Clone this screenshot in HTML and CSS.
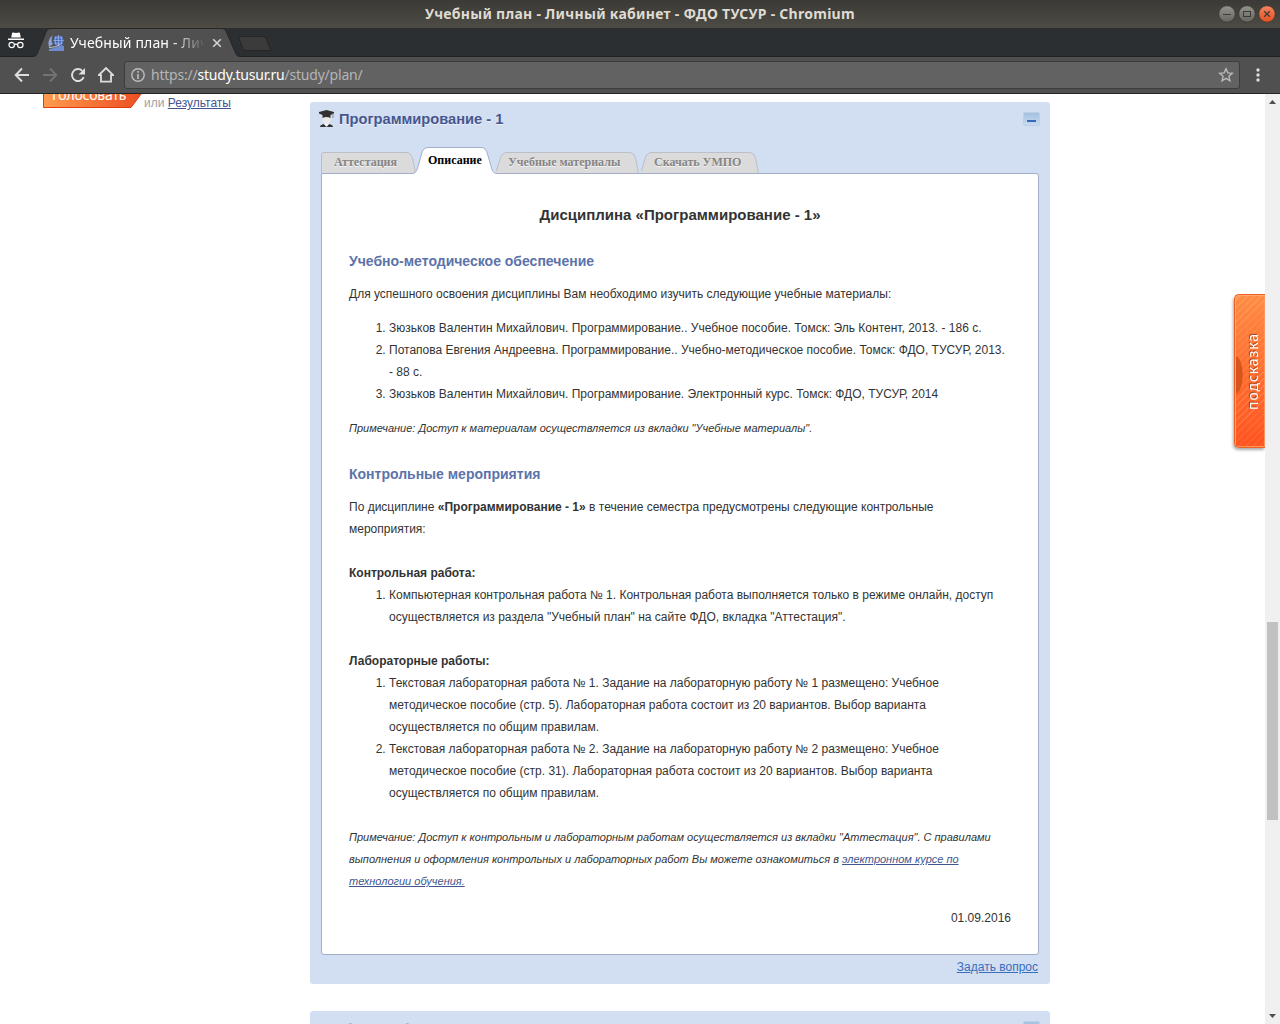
FILE: index.html
```html
<!DOCTYPE html>
<html lang="ru">
<head>
<meta charset="utf-8">
<title>Учебный план - Личный кабинет - ФДО ТУСУР</title>
<link rel="stylesheet" href="styles.css">
</head>
<body>
<div class="window">
  <header class="titlebar">
    <span class="window-title">Учебный план - Личный кабинет - ФДО ТУСУР - Chromium</span>
    <div class="controls">
      <svg class="control" viewBox="0 0 18 18"><circle cx="9" cy="9" r="8.200" fill="url(#grey)" stroke="#34332e" stroke-width=".6"/><path d="M5 9.500h8" stroke="#3c3b37"/></svg>
      <svg class="control" viewBox="0 0 18 18"><circle cx="9" cy="9" r="8.200" fill="url(#grey)" stroke="#34332e" stroke-width=".6"/><rect x="5.500" y="6.500" width="7" height="5" fill="none" stroke="#3c3b37"/></svg>
      <svg class="control" viewBox="0 0 18 18"><defs><linearGradient id="grey" x2="0" y2="1"><stop stop-color="#95948c"/><stop offset="1" stop-color="#65645e"/></linearGradient><linearGradient id="red" x2="0" y2="1"><stop stop-color="#f58360"/><stop offset="1" stop-color="#e4511f"/></linearGradient></defs><circle cx="9" cy="9" r="8.200" fill="url(#red)" stroke="#34332e" stroke-width=".6"/><path d="M6.200 6.200l5.600 5.600m0-5.600l-5.600 5.600" stroke="#3c3b37" stroke-width="1.300"/></svg>
    </div>
  </header>

  <div class="tabstrip">
    <svg class="incognito" viewBox="0 0 18 18"><path d="M5 1.500Q5 .5 6 .5l3 .6 3-.6q1 0 1 1l.8 4H4.200zM1 6.500h16v1.600H1z" fill="#fff"/><g fill="none" stroke="#fff" stroke-width="1.200"><circle cx="4.700" cy="13" r="2.700"/><circle cx="13.300" cy="13" r="2.700"/><path d="M7.400 12.700Q9 11.500 10.600 12.700"/></g></svg>
    <div class="browser-tab">
      <svg class="shape" viewBox="0 0 206 29" preserveAspectRatio="none"><path d="M0 28.500Q2 28 3 26L12.500 3Q13.500.5 16 .5H188Q191 .5 192 3L202 26Q203 28.500 206 28.500V29H0z" fill="#505050"/><path d="M0 28.500Q2 28 3 26L12.500 3Q13.500.5 16 .5H188Q191 .5 192 3L202 26Q203 28.500 206 28.500" fill="none" stroke="#242628"/></svg>
      <svg class="favicon" viewBox="0 0 16 16"><path d="M4 1Q-1 5 1 12l4-3Q2 5 5 0z" fill="#8da3da"/><path d="M1 14q7-1 12-4l3 1v5H1z" fill="#6f8bd0"/><circle cx="10.500" cy="5.500" r="5.300" fill="#4568b9"/><path d="M5.500 5.500h10M6.500 2.800h8M6.500 8.300h8M10.500 0v11M8 1q-2 4.500 0 9M13 1q2 4.500 0 9" stroke="#b4c6ef" fill="none" stroke-width=".6"/><path d="M1 12.500q7 0 11-3" stroke="#dfe6f6" fill="none" stroke-width=".8"/></svg>
      <span class="tab-title">Учебный план - Лич</span>
      <svg class="tab-close" viewBox="0 0 10 10"><path d="M1.200 1.200l7.600 7.600m0-7.600L1.200 8.800" stroke="#d2d2d2" stroke-width="1.600"/></svg>
    </div>
    <svg class="new-tab" viewBox="0 0 36 18"><path d="M4 1.500h23q2 0 3 2l4 10q1 2-1 2H10q-2 0-3-2L3 3.500q-1-2 1-2z" fill="#3b3b3b" stroke="#242526"/></svg>
  </div>

  <div class="toolbar">
    <svg class="nav" viewBox="0 0 16 16"><path d="M15 8H2M8 1.500L1.700 8 8 14.500" fill="none" stroke="#dedede" stroke-width="1.900"/></svg>
    <svg class="nav" viewBox="0 0 16 16"><path d="M1 8h13M8 1.500L14.300 8 8 14.500" fill="none" stroke="#737373" stroke-width="1.900"/></svg>
    <svg class="nav" viewBox="0 0 16 16"><path d="M13.700 10A6 6 0 1 1 12.300 3.800" fill="none" stroke="#dedede" stroke-width="1.900"/><path d="M15 1v6.500H8.500z" fill="#dedede"/></svg>
    <svg class="nav" viewBox="0 0 16 16"><path d="M.8 8.200L8 1l7.200 7.200H13v6.500H3V8.200z" fill="none" stroke="#dedede" stroke-width="1.800"/></svg>
    <div class="address">
      <svg class="info" viewBox="0 0 14 14"><circle cx="7" cy="7" r="6.200" fill="none" stroke="#bcbcbc" stroke-width="1.400"/><path d="M7 3v1.700M7 6v5" stroke="#bcbcbc" stroke-width="1.600"/></svg>
      <span class="url">https://<b>study.tusur.ru</b>/study/plan/</span>
      <svg class="star" viewBox="0 0 16 16"><path d="M8 1.800l1.800 4.100 4.500.4-3.400 3 1 4.400L8 11.400l-3.900 2.300 1-4.400-3.400-3 4.500-.4z" fill="none" stroke="#bababa" stroke-width="1.400"/></svg>
    </div>
    <svg class="more" viewBox="0 0 4 14"><g fill="#dedede"><circle cx="2" cy="2" r="1.700"/><circle cx="2" cy="7" r="1.700"/><circle cx="2" cy="12" r="1.700"/></g></svg>
  </div>

  <div class="viewport">
    <div class="page">
      <aside class="vote">
        <div class="vote-button"><svg class="shape" viewBox="0 0 99 22"><defs><linearGradient id="vote"><stop stop-color="#ff9b4e"/><stop offset="1" stop-color="#ed4e23"/></linearGradient></defs><path d="M.5 -1V21.500H88L98.500 7.500V-1z" fill="url(#vote)" stroke="#e33a16"/></svg><span class="vote-text">Голосовать</span></div>
        <span class="or">или <a class="link">Результаты</a></span>
      </aside>
      <main class="courses">
        <section class="course">
          <div class="course-head">
            <svg class="student" viewBox="0 0 16 18"><path d="M3.500 5h8v6q-1.500 3-4 3t-4-3z" fill="#e9e9e9"/><path d="M0 2L7.500 0 15 2v1.500L11.500 5v3q-4-2-8 0V5L0 3.500z" fill="#303030"/><path d="M14 3v5" stroke="#888"/><path d="M1 17q0-2 4-3l2.500 2 2.500-2q4 1 4 3z" fill="#333"/><path d="M4.500 13.500l3 3.500 3-3.500z" fill="#f6f6f6"/></svg>
            <h2 class="course-title">Программирование - 1</h2>
            <span class="collapse"><i class="dash"></i></span>
          </div>
          <nav class="tabs">
            <div class="tab first"><svg class="shape" viewBox="0 0 95 22" preserveAspectRatio="none"><path d="M.5 22V3Q.5.5 3 .5H85Q90 .5 91.500 7L94 19V22" fill="#dcdbdc" stroke="#b9bdc5"/></svg><span class="tab-label">Аттестация</span></div>
            <div class="tab active"><svg class="shape" viewBox="0 0 82 28" preserveAspectRatio="none"><path d="M0 26.500Q3 25 4.500 18L7.500 7Q9 .5 14 .5H67Q72 .5 73.500 7L77 19Q78.500 26 82 26.500V28H0z" fill="#fff"/><path d="M0 26.500Q3 25 4.500 18L7.500 7Q9 .5 14 .5H67Q72 .5 73.500 7L77 19Q78.500 26 82 26.500" fill="none" stroke="#a1afcb"/></svg><span class="tab-label">Описание</span></div>
            <div class="tab third"><svg class="shape" viewBox="0 0 143 22" preserveAspectRatio="none"><path d="M.5 20L4 7Q6 .5 11 .5H133Q138 .5 139.500 7L142 19V22H.5z" fill="#dcdbdc"/><path d="M.5 20L4 7Q6 .5 11 .5H133Q138 .5 139.500 7L142 19V22" fill="none" stroke="#b9bdc5"/></svg><span class="tab-label">Учебные материалы</span></div>
            <div class="tab fourth"><svg class="shape" viewBox="0 0 118 22" preserveAspectRatio="none"><path d="M.5 20L4 7Q6 .5 11 .5H108Q113 .5 114.500 7L117 19V22H.5z" fill="#dcdbdc"/><path d="M.5 20L4 7Q6 .5 11 .5H108Q113 .5 114.500 7L117 19V22" fill="none" stroke="#b9bdc5"/></svg><span class="tab-label">Скачать УМПО</span></div>
          </nav>
          <article class="content">
            <h1 class="discipline">Дисциплина «Программирование - 1»</h1>
            <h3 class="subhead">Учебно-методическое обеспечение</h3>
            <p class="lead">Для успешного освоения дисциплины Вам необходимо изучить следующие учебные материалы:</p>
            <ol class="list">
              <li>Зюзьков Валентин Михайлович. Программирование.. Учебное пособие. Томск: Эль Контент, 2013. - 186 с.</li>
              <li>Потапова Евгения Андреевна. Программирование.. Учебно-методическое пособие. Томск: ФДО, ТУСУР, 2013. - 88 с.</li>
              <li>Зюзьков Валентин Михайлович. Программирование. Электронный курс. Томск: ФДО, ТУСУР, 2014</li>
            </ol>
            <p class="note">Примечание: Доступ к материалам осуществляется из вкладки "Учебные материалы".</p>
            <h3 class="subhead">Контрольные мероприятия</h3>
            <p>По дисциплине <b>«Программирование - 1»</b> в течение семестра предусмотрены следующие контрольные мероприятия:</p>
            <p class="group">Контрольная работа:</p>
            <ol class="list">
              <li>Компьютерная контрольная работа № 1. Контрольная работа выполняется только в режиме онлайн, доступ осуществляется из раздела "Учебный план" на сайте ФДО, вкладка "Аттестация".</li>
            </ol>
            <p class="group">Лабораторные работы:</p>
            <ol class="list">
              <li>Текстовая лабораторная работа № 1. Задание на лабораторную работу № 1 размещено: Учебное методическое пособие (стр. 5). Лабораторная работа состоит из 20 вариантов. Выбор варианта осуществляется по общим правилам.</li>
              <li>Текстовая лабораторная работа № 2. Задание на лабораторную работу № 2 размещено: Учебное методическое пособие (стр. 31). Лабораторная работа состоит из 20 вариантов. Выбор варианта осуществляется по общим правилам.</li>
            </ol>
            <p class="note last">Примечание: Доступ к контрольным и лабораторным работам осуществляется из вкладки "Аттестация". С правилами выполнения и оформления контрольных и лабораторных работ Вы можете ознакомиться в <a class="link">электронном курсе по технологии обучения.</a></p>
            <p class="date">01.09.2016</p>
          </article>
          <div class="ask"><a class="ask-link">Задать вопрос</a></div>
        </section>
        <section class="course">
          <div class="course-head">
            <h2 class="course-title next">Учебная работа</h2>
            <span class="collapse"><i class="dash"></i></span>
          </div>
        </section>
      </main>
      <div class="hint"><span class="hint-text">подсказка</span></div>
    </div>
    <div class="scrollbar">
      <svg class="arrow" viewBox="0 0 15 15"><path d="M4 10h7L7.500 6z" fill="#505050"/></svg>
      <div class="thumb"></div>
      <svg class="arrow" viewBox="0 0 15 15"><path d="M4 5h7L7.500 9z" fill="#505050"/></svg>
    </div>
  </div>
</div>
</body>
</html>
```

FILE: styles.css
```css
* { box-sizing: border-box; }
body { margin: 0; overflow: hidden; font: 12px/22px "Liberation Sans", Arial, sans-serif; color: #333; }
h1, h2, h3, p, ol { margin: 0; padding: 0; }
svg { display: block; flex: none; }
.window { width: 1280px; height: 1024px; display: flex; flex-direction: column; overflow: hidden; background: #fff; }
.shape { position: absolute; inset: 0; width: 100%; height: 100%; overflow: visible; }

.titlebar { position: relative; height: 28px; flex: none; display: flex; align-items: center; justify-content: center; background: linear-gradient(#3b3a36, #4d4b44); }
.window-title { font: bold 14px/28px "Noto Sans", sans-serif; letter-spacing: .27px; color: #dfdbd2; white-space: nowrap; }
.controls { position: absolute; right: 4px; top: 5px; display: flex; gap: 2px; }
.control { width: 18px; height: 18px; }

.tabstrip { height: 29px; flex: none; display: flex; background: #2b2f32; border-bottom: 1px solid #222; }
.incognito { width: 18px; height: 18px; margin: 4px 0 0 7px; }
.browser-tab { position: relative; width: 206px; height: 29px; margin-left: 9px; display: flex; align-items: center; padding-left: 14px; }
.favicon { position: relative; width: 16px; height: 16px; margin-top: 1px; }
.tab-title { position: relative; width: 134px; margin-left: 6px; overflow: hidden; white-space: nowrap; font: 14px/28px "Noto Sans", sans-serif; letter-spacing: .15px; color: #fff; -webkit-mask-image: linear-gradient(90deg, #000 100px, transparent 136px); mask-image: linear-gradient(90deg, #000 100px, transparent 136px); }
.tab-close { position: relative; width: 10px; height: 10px; margin-left: 8px; }
.new-tab { width: 36px; height: 18px; margin: 7px 0 0 -4px; }

.toolbar { height: 37px; flex: none; display: flex; align-items: center; padding: 0 20px 1px 14px; background: #505050; border-bottom: 1px solid #252525; }
.nav { width: 16px; height: 16px; margin-right: 12px; }
.address { height: 28px; width: 1116px; margin-left: -2px; margin-top: 1px; display: flex; align-items: center; padding: 0 5px 0 6px; background: #626262; border: 1px solid #3d3d3d; border-radius: 3px; }
.info { width: 14px; height: 14px; }
.url { flex: 1; margin-left: 6px; font: 14px/26px "Noto Sans", sans-serif; letter-spacing: -.22px; color: #b5b5b5; }
.url b { font-weight: normal; color: #fff; }
.star { width: 16px; height: 16px; }
.more { width: 4px; height: 14px; margin-left: 16px; margin-top: 1px; }

.viewport { flex: 1; min-height: 0; display: flex; }
.page { position: relative; width: 1265px; display: flex; overflow: hidden; }
.vote { width: 310px; display: flex; padding-left: 43px; white-space: nowrap; flex: none; }
.vote-button { position: relative; width: 99px; height: 22px; margin-top: -8px; padding-left: 9px; }
.vote-text { position: relative; top: -1px; font: 14px/20px "Noto Sans", sans-serif; letter-spacing: -.2px; color: #fff; }
.or { margin: -2px 0 0 2px; color: #a1a1a1; }
.link { color: #41568f; text-decoration: underline; }

.courses { width: 740px; flex: none; padding-top: 8px; display: flex; flex-direction: column; gap: 27px; }
.course { height: 882px; flex: none; background: #d2def1; border-radius: 3px; padding: 0 11px; }
.course-head { height: 45px; display: flex; align-items: flex-start; padding: 8px 0 0; margin: 0 -1px 0 -2px; }
.student { width: 16px; height: 18px; }
.course-title { flex: 1; margin-left: 4px; font-size: 14.670px; line-height: 18px; color: #45568f; text-shadow: 0 1px #edf2fa; }
.course-title.next { margin: 1px 0 0 -2px; letter-spacing: .2px; }
.collapse { width: 17px; height: 14px; margin-top: 2px; display: flex; justify-content: center; padding-top: 7px; border: 1px solid #bdd0e6; border-radius: 2px; background: linear-gradient(#a5c1e0, #c7dbf0); }
.dash { width: 9px; height: 2px; background: #386abb; }

.tabs { position: relative; height: 26px; display: flex; align-items: flex-end; }
.tab { position: relative; height: 21px; font: bold 12px/20px "Liberation Serif", "Times New Roman", serif; color: #858585; white-space: nowrap; text-shadow: 0 1px #f5f5f5; }
.tab-label { position: relative; }
.first { width: 95px; padding-left: 13px; }
.active { width: 82px; height: 28px; margin: 0 0 -2px -2px; padding-left: 14px; line-height: 26px; color: #000; z-index: 1; }
.third { width: 143px; padding-left: 12px; }
.fourth { width: 118px; margin-left: 2px; padding-left: 13px; }

.content { height: 782px; padding: 30px 27px 25px; border: 1px solid #a3afc6; border-radius: 0 3px 3px 3px; background: #fff; }
.discipline { text-align: center; font-size: 15px; line-height: 22px; margin-bottom: 24px; }
.subhead { font-size: 14px; line-height: 22px; color: #5b73aa; margin-bottom: 11px; }
.lead { margin-bottom: 12px; }
.list { padding-left: 40px; }
.note { margin: 12px 0 24px; font-size: 11px; font-style: italic; }
.group { margin-top: 22px; font-weight: bold; }
.last { margin: 22px 0 15px; }
.date { text-align: right; }
.ask { text-align: right; padding: 1px 1px 0 0; }
.ask-link { color: #376fbd; text-decoration: underline; }

.hint { position: absolute; right: 0; top: 200px; width: 31px; height: 154px; display: flex; align-items: center; justify-content: center; padding-left: 5px; border: 1px solid #f06022; border-right: 0; border-radius: 5px 0 0 5px; box-shadow: -1px 2px 3px #aaa, inset 1px 1px #ffa66d, inset -1px -1px #ff965d; background: radial-gradient(ellipse 8px 20px at 0 80px, #d9541c 0 90%, transparent 100%), repeating-linear-gradient(135deg, transparent 0 4px, #ffffff22 4px 5px), linear-gradient(#ff8b43, #ff541f); }
.hint-text { writing-mode: vertical-rl; transform: rotate(180deg); font: 14px/18px "Noto Sans", sans-serif; letter-spacing: .9px; color: #fff; text-shadow: 1px -1px 1px #a34219; }
.scrollbar { width: 15px; flex: none; display: flex; flex-direction: column; background: #f0f0f0; }
.arrow { width: 15px; height: 15px; }
.thumb { width: 11px; height: 198px; margin: 513px 2px auto; background: #c1c1c1; }
```
